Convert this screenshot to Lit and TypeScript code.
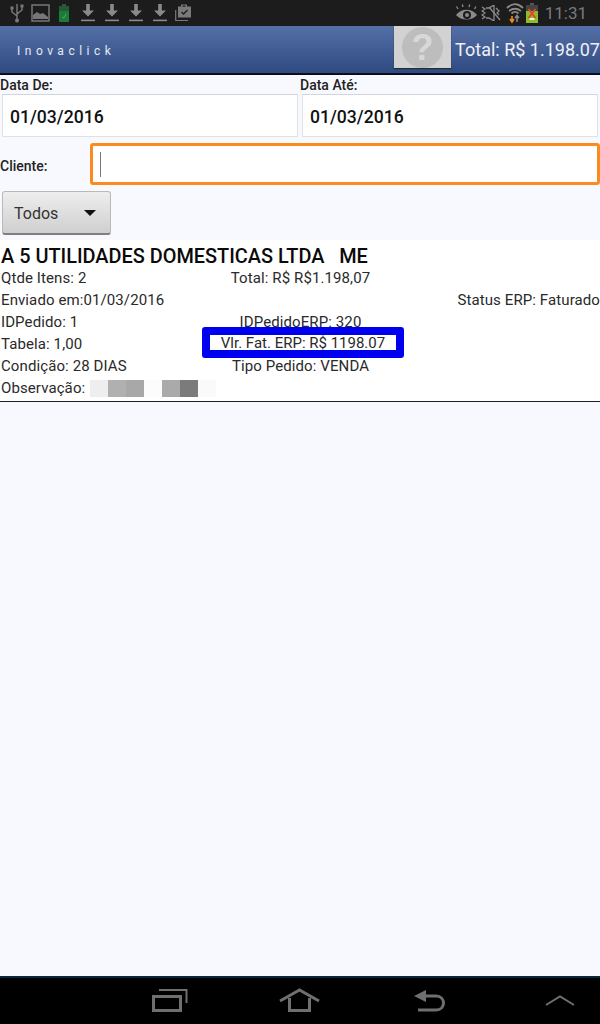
import { LitElement, html, css } from "lit";
import { customElement } from "lit/decorators.js";

const ICON = "#6f6f6f";
const download = html`<svg class="dl" width="14" height="18" viewBox="0 0 14 18"><path d="M5.2 0h3.6v6.5H13L7 12.5 1 6.5h4.2z" fill="#8a8a8a"/><rect y="15.6" width="14" height="1.6" fill="#8a8a8a"/></svg>`;

@customElement("app-root")
export class AppRoot extends LitElement {
  static styles = css`
    :host { display: flex; flex-direction: column; width: 600px; height: 1024px; overflow: hidden; background: #f8f9fe; font-family: Roboto, "Liberation Sans", sans-serif; color: #111; }
    .status { height: 26px; flex: none; background: #1c1c1c; display: flex; align-items: center; justify-content: space-between; }
    .status-left { display: flex; align-items: center; gap: 10px; padding-left: 10px; }
    .status-right { display: flex; align-items: center; padding-right: 13px; }
    .clock { color: #7a7a7a; font-size: 17px; margin-left: 7px; letter-spacing: 0; line-height: 26px; }
    .appbar { height: 48px; flex: none; box-sizing: border-box; background: linear-gradient(#5570a6, #2f4a80); border-bottom: 1px solid #0a1226; display: flex; align-items: center; box-shadow: 0 1px 0 #0a0a14; }
    .brand { color: #e6e9f2; font-size: 12px; letter-spacing: 4.5px; padding-left: 17px; flex: 1; margin-top: 2px; }
    .help { width: 57px; height: 42px; background: #d2d2d2; display: flex; align-items: center; justify-content: center; box-shadow: 0 1px 1px #2a2a2a; margin-bottom: 5px; }
    .help-dot { width: 41px; height: 41px; border-radius: 50%; background: #bdbdbd; color: #d8d8d8; font: bold 36px/41px "Liberation Sans", sans-serif; text-align: center; }
    .total { color: #eef0f6; font-size: 18px; margin-left: 4px; white-space: nowrap; }
    .form { height: 165px; flex: none; box-sizing: border-box; margin-top: 1px; }
    .dates { display: grid; grid-template-columns: 300px 300px; }
    .label { font-size: 14px; font-weight: 500; line-height: 21px; height: 19px; color: #222; }
    .date { margin-left: 2px; width: 296px; height: 43px; box-sizing: border-box; background: #fff; border: 1px solid #dfe1e8; border-top-color: #d3d5dc; font-size: 17.6px; font-weight: 500; line-height: 44px; padding-left: 7px; }
    .client { display: flex; align-items: center; margin-top: 6px; height: 42px; }
    .client .label { width: 90px; flex: none; height: auto; padding-top: 5px; }
    .input { flex: 1; height: 42px; box-sizing: border-box; background: #fff; border: 3px solid #fb8b1e; border-radius: 3px; display: flex; align-items: center; padding-left: 7px; }
    .caret { width: 1px; height: 25px; background: #777; }
    .select { margin: 6px 0 0 2px; width: 109px; height: 44px; box-sizing: border-box; background: linear-gradient(#eeeeee, #cfcfcf); border: 1px solid #b9b9b9; border-bottom: 2px solid #7f7f7f; border-radius: 3px; display: flex; align-items: center; justify-content: space-between; padding: 1px 14px 0 11px; font-size: 16px; color: #333; }
    .arrow { width: 0; height: 0; border-left: 6.5px solid transparent; border-right: 6.5px solid transparent; border-top: 6.5px solid #111; }
    .card { position: relative; flex: none; height: 162px; box-sizing: border-box; background: #fff; border-bottom: 1px solid #222; }
    .title { font-size: 19.9px; font-weight: 500; line-height: 22px; padding: 6px 0 0 1px; height: 27px; box-sizing: border-box; white-space: pre; color: #0a0a0a; }
    .row { display: grid; grid-template-columns: 1fr auto 1fr; height: 22px; font-size: 15px; line-height: 22px; padding: 0 0 0 1px; color: #2a2a2a; white-space: nowrap; letter-spacing: .1px; }
    .row > :last-child { text-align: right; }
    .obs { display: flex; align-items: center; height: 22px; font-size: 15px; padding-left: 1px; color: #2a2a2a; letter-spacing: .1px; }
    .obs-text { width: 89px; white-space: nowrap; }
    .blur { width: 18px; height: 17px; }
    .highlight { position: absolute; left: 202px; top: 87px; width: 202px; height: 31px; box-sizing: border-box; border: 8px solid #0000f0; border-radius: 3px; background: #fff; display: flex; align-items: center; justify-content: center; font-size: 15px; color: #2a2a2a; white-space: nowrap; letter-spacing: 0; }
    .spacer { flex: 1; }
    .nav { height: 46px; flex: none; background: #000; border-top: 2px solid #06283a; position: relative; }
    .nav svg { position: absolute; top: 10px; }
  `;

  private row(a: string, b: string, c: string) {
    return html`<div class="row"><span>${a}</span><span>${b}</span><span>${c}</span></div>`;
  }

  render() {
    return html`
      <div class="status">
        <div class="status-left">
          <svg width="14" height="20" viewBox="0 0 14 20" style="margin-right:-3px"><path d="M7 1v17M7 13 2 9V6M7 11l5-4V4" fill="none" stroke="#7a7a7a" stroke-width="1.4"/><circle cx="7" cy="17.5" r="2" fill="#7a7a7a"/><rect x="0.5" y="3.5" width="3" height="3" fill="#7a7a7a"/><rect x="10.500" y="1.500" width="3" height="3" fill="#7a7a7a"/></svg>
          <svg width="19" height="18" viewBox="0 0 19 18" style="margin-right:-1px"><rect x="1" y="1" width="17" height="16" fill="none" stroke="#777" stroke-width="1.500"/><path d="M2 15v-4l4-3 3 2 3-1 5 4v2z" fill="#777"/></svg>
          <svg width="10" height="18" viewBox="0 0 10 18" style="margin-right:2px"><rect x="3" y="0" width="4" height="2" fill="#2c5a35"/><rect x="0" y="2" width="10" height="16" fill="#1d7a3a"/><rect x="0" y="2" width="10" height="5" fill="#235a33"/><path d="M3 13l2 1 2-4" fill="none" stroke="#49a860" stroke-width="1"/></svg>
          ${download}${download}${download}${download}
          <svg width="18" height="18" viewBox="0 0 18 18" style="margin-left:-2px"><path d="M0.700 6v10.500H13" fill="none" stroke="#7a7a7a" stroke-width="1.200"/><path d="M3 2.500h3V0.500h6v2h4v11H3z" fill="#7a7a7a"/><rect x="7.500" y="1.500" width="3" height="1.200" fill="#1c1c1c"/><path d="M6.500 8l2 2 4-4" fill="none" stroke="#1c1c1c" stroke-width="1.300"/></svg>
        </div>
        <div class="status-right">
          <svg width="23" height="19" viewBox="0 0 23 19"><path d="M1 11c5-7 16-7 21 0-5 6-16 6-21 0z" fill="#8a8a8a"/><circle cx="12" cy="11" r="4" fill="#1c1c1c"/><circle cx="12" cy="11" r="2" fill="#8a8a8a"/><path d="M3 5 1.500 2.500M8 3 7.300 0.500M14 3l.7-2.500M19.500 5 21 2.500" stroke="#8a8a8a" stroke-width="1.300"/></svg>
          <svg width="20" height="16" viewBox="0 0 20 16" style="margin-left:3px"><path d="M1 2l3 2-3 2 3 2-3 2 3 2-3 2M5 3h3l5-3v16l-5-3H5" fill="none" stroke="#8a8a8a" stroke-width="1.300"/><path d="M8 2l11 13M15 3l3 3-2 2 2 2" fill="none" stroke="#8a8a8a" stroke-width="1.300"/></svg>
          <svg width="18" height="22" viewBox="0 0 18 22" style="margin-left:5px"><path d="M1 6c5-5 11-5 16 0M3 9c4-3 8-3 12 0M5.500 11.500c2-2 5-2 7 0" fill="none" stroke="#8a8a8a" stroke-width="1.800"/><path d="M6 14v5M4 17l2 3 2-3" fill="none" stroke="#f08a1d" stroke-width="1.600"/><path d="M11 20v-6M9 16l2-2.500 2 2.500" fill="none" stroke="#8a8a8a" stroke-width="1.500"/></svg>
          <svg width="12" height="20" viewBox="0 0 12 20" style="margin-left:2px"><rect x="4" y="0" width="4" height="2" fill="#555"/><rect x="0" y="2" width="12" height="6" fill="#444"/><rect x="0" y="8" width="12" height="13" fill="#8dbb2c"/><path d="M2.500 6l7 9M9.500 6l-7 9" stroke="#e4432c" stroke-width="1.800"/><rect x="3.500" y="15" width="5" height="2" fill="#f0f0d8"/></svg>
          <span class="clock">11:31</span>
        </div>
      </div>
      <div class="appbar">
        <div class="brand">Inovaclick</div>
        <div class="help"><div class="help-dot">?</div></div>
        <div class="total">Total: R$ 1.198.07</div>
      </div>
      <div class="form">
        <div class="dates">
          <div><div class="label">Data De:</div><div class="date">01/03/2016</div></div>
          <div><div class="label">Data Até:</div><div class="date">01/03/2016</div></div>
        </div>
        <div class="client"><div class="label">Cliente:</div><div class="input"><div class="caret"></div></div></div>
        <div class="select"><span>Todos</span><span class="arrow"></span></div>
      </div>
      <div class="card">
        <div class="title">A 5 UTILIDADES DOMESTICAS LTDA   ME</div>
        ${this.row("Qtde Itens: 2", "Total: R$ R$1.198,07", "")}
        ${this.row("Enviado em:01/03/2016", "", "Status ERP: Faturado")}
        ${this.row("IDPedido: 1", "IDPedidoERP: 320", "")}
        ${this.row("Tabela: 1,00", "", "")}
        ${this.row("Condição: 28 DIAS", "Tipo Pedido: VENDA", "")}
        <div class="obs"><span class="obs-text">Observação:</span>
          ${["#eeeeee", "#b0b0b0", "#a8a8a8", "#fcfcfc", "#aaaaaa", "#7b7b7b", "#fafafa"].map(
            (c) => html`<div class="blur" style="background:${c}"></div>`
          )}
        </div>
        <div class="highlight">Vlr. Fat. ERP: R$ 1198.07</div>
      </div>
      <div class="spacer"></div>
      <div class="nav">
        <svg style="left:152px" width="36" height="24" viewBox="0 0 36 24"><path d="M1.500 8.500h27v14h-27z" fill="none" stroke="${ICON}" stroke-width="3"/><path d="M7 2h27.500v13" fill="none" stroke="${ICON}" stroke-width="2"/></svg>
        <svg style="left:279px" width="41" height="24" viewBox="0 0 41 24"><path d="M1 13 20.500 2 40 13" fill="none" stroke="${ICON}" stroke-width="3"/><path d="M10.500 10v12.500h20V10" fill="none" stroke="${ICON}" stroke-width="3"/></svg>
        <svg style="left:413px" width="34" height="24" viewBox="0 0 34 24"><path d="M1 8l12-6v12z" fill="${ICON}"/><path d="M10 8h13c10 0 10 14 0 14H5" fill="none" stroke="${ICON}" stroke-width="3"/></svg>
        <svg style="left:545px" width="30" height="24" viewBox="0 0 30 24"><path d="M1 17 15 8.500 29 17" fill="none" stroke="${ICON}" stroke-width="2"/></svg>
      </div>
    `;
  }
}
